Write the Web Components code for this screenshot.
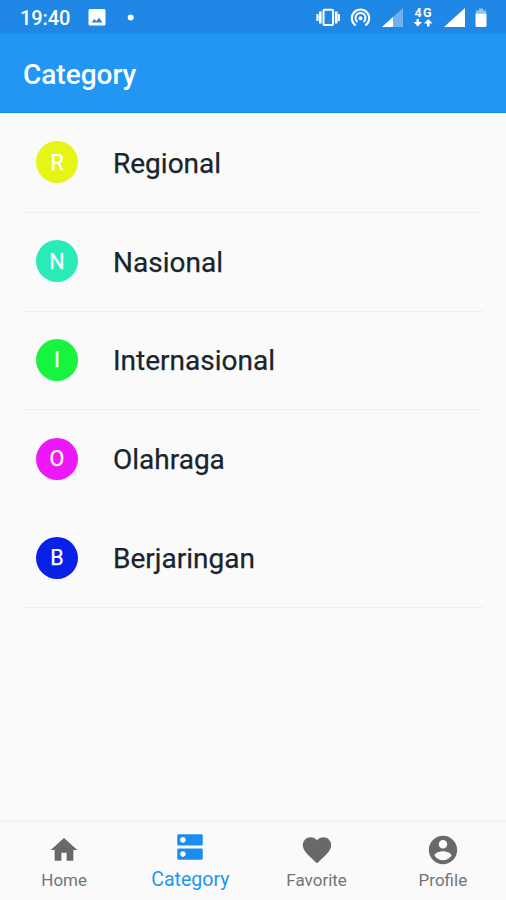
<!DOCTYPE html>
<html lang="id">
<head>
<meta charset="utf-8">
<title>Category</title>
<style>
html, body { margin: 0; height: 100%; }
body { font-family: Roboto, "Liberation Sans", sans-serif; background: #fafafa; overflow: hidden; }
</style>
</head>
<body>
<news-app></news-app>
<script>
class BaseElement extends HTMLElement {
  constructor() {
    super();
    this.attachShadow({ mode: "open" });
  }
  connectedCallback() {
    this.shadowRoot.innerHTML = this.render();
  }
}

customElements.define("status-bar", class extends BaseElement {
  render() {
    return `<style>
      :host { display: flex; justify-content: space-between; box-sizing: border-box; height: 34px; padding: 0 18px 0 20px; background: #1f87e5; color: #fff; }
      .side { display: flex; align-items: center; height: 36px; }
      time { font-size: 20px; font-weight: 500; width: 68px; letter-spacing: -.1px; }
      svg { display: block; flex: none; }
    </style>
    <div class="side">
      <time>19:40</time>
      <svg width="46" height="36" viewBox="88 0 46 36"><path fill="#fff" fill-rule="evenodd" d="M90 9h14q1.500 0 1.500 1.500v13.500q0 1.500-1.500 1.500h-14q-1.500 0-1.500-1.500v-13.500q0-1.500 1.500-1.500zM91.500 22.500h11l-3.500-4.800-2.700 3.500-1.900-2.300z"/><circle cx="130.700" cy="17.500" r="3" fill="#fff"/></svg>
    </div>
    <div class="side">
      <svg width="174" height="36" viewBox="314 0 174 36" fill="none" stroke="#fff">
        <rect x="323.500" y="9.800" width="9.500" height="15.200" rx="1" stroke-width="2"/>
        <path d="M320.300 11.500v12M336.200 11.500v12" stroke-width="2.600"/><path d="M317.500 14v7M338.800 14v7" stroke-width="2.200"/>
        <g stroke-width="2"><path d="M355.700 25.500a8.700 8.700 0 1 1 9.600 0"/><path d="M357.500 21.900a5 5 0 1 1 6 0"/></g><circle cx="360.500" cy="18.300" r="2" fill="#fff" stroke="none"/>
        <path d="M403 8v19h-21z" fill="#6eb3f0" stroke="none"/><path d="M393 17v10h-11z" fill="#fff" stroke="none"/>
        <text x="414.500" y="17" fill="#fff" stroke="none" font-family="Roboto" font-size="12.500" font-weight="700" textLength="17">4G</text>
        <path fill="#fff" stroke="none" d="M416.500 19h2.500v3h3l-4.250 4.500-4.250-4.500h3zM427 26.500h2.500v-3h3l-4.250-4.500-4.250 4.500h3z"/>
        <path d="M465 8v19h-21z" fill="#fff" stroke="none"/>
        <path d="M479 8.500h4v2h3v3h-10v-3h3z" fill="#8fc3f2" stroke="none"/><path d="M475.500 13.500h11v12q0 1.500-1.500 1.500h-8q-1.500 0-1.500-1.500z" fill="#fff" stroke="none"/>
      </svg>
    </div>`;
  }
});

customElements.define("app-bar", class extends BaseElement {
  render() {
    return `<style>
      :host { display: flex; align-items: center; box-sizing: border-box; height: 79px; padding: 4px 23px 0; background: #2196f3; color: #fff; border-bottom: 1px solid #168be9; }
      h1 { margin: 0; font-size: 28px; font-weight: 500; line-height: 34px; }
    </style><h1><slot></slot></h1>`;
  }
});

customElements.define("category-row", class extends BaseElement {
  render() {
    return `<style>
      :host { display: flex; align-items: center; box-sizing: border-box; height: 98.800px; margin: 0 22px 0 24px; padding: 0 0 1px 12px; border-bottom: 1px solid #f0f0f0; gap: 35px; }
      :host([faint]) { border-color: #f7f7f7; }
      .avatar { display: flex; align-items: center; justify-content: center; flex: none; width: 42px; height: 42px; border-radius: 50%; background: ${this.getAttribute("color")}; color: #fff; font-size: 21.500px; -webkit-text-stroke: .25px #fff; }
      .label { font-size: 28px; line-height: 34px; color: #19242d; padding-top: 3px; -webkit-text-stroke: .25px #19242d; }
    </style><span class="avatar">${this.getAttribute("letter")}</span><span class="label"><slot></slot></span>`;
  }
});

const ICONS = {
  home: "M10 20v-6h4v6h5v-8h3L12 3 2 12h3v8z",
  category: "M20 13H4c-.55 0-1 .45-1 1v6c0 .55.45 1 1 1h16c.55 0 1-.45 1-1v-6c0-.55-.45-1-1-1zM7 19c-1.100 0-2-.9-2-2s.9-2 2-2 2 .9 2 2-.9 2-2 2zM20 3H4c-.55 0-1 .45-1 1v6c0 .55.45 1 1 1h16c.55 0 1-.45 1-1V4c0-.55-.45-1-1-1zM7 9c-1.100 0-2-.9-2-2s.9-2 2-2 2 .9 2 2-.9 2-2 2z",
  favorite: "M12 21.350l-1.450-1.320C5.400 15.360 2 12.280 2 8.500 2 5.420 4.420 3 7.500 3c1.740 0 3.410.81 4.500 2.090C13.090 3.810 14.760 3 16.500 3 19.580 3 22 5.420 22 8.500c0 3.780-3.400 6.860-8.550 11.540z",
  profile: "M12 2C6.480 2 2 6.480 2 12s4.480 10 10 10 10-4.480 10-10S17.520 2 12 2zm0 3c1.660 0 3 1.340 3 3s-1.340 3-3 3-3-1.340-3-3 1.340-3 3-3zm0 14.200c-2.500 0-4.710-1.280-6-3.220.03-1.990 4-3.080 6-3.080 1.990 0 5.970 1.090 6 3.080-1.290 1.940-3.500 3.220-6 3.220z"
};

customElements.define("nav-tab", class extends BaseElement {
  render() {
    return `<style>
      :host { display: flex; flex-direction: column; align-items: center; flex: 1; padding-top: 11px; color: #747474; font-size: 17px; line-height: 22px; }
      :host([active]) { padding-top: 8px; color: #2196f3; font-size: 19.500px; }
      svg { display: block; fill: #696969; }
      :host([active]) svg { fill: #1b8df0; }
      :host([icon="home"]) svg { width: 32px; height: 32px; padding: 1px; }
      span { padding-top: 2px; }
      :host([active]) span { padding-top: 5px; }
    </style>
    <svg width="34" height="34" viewBox="0 0 24 24"><path d="${ICONS[this.getAttribute("icon")]}"/></svg>
    <span><slot></slot></span>`;
  }
});

customElements.define("bottom-nav", class extends BaseElement {
  render() {
    return `<style>
      :host { display: flex; box-sizing: border-box; height: 80px; padding-left: 1px; border-top: 2px solid #f2f2f2; background: #fafafa; }
    </style><slot></slot>`;
  }
});

customElements.define("news-app", class extends BaseElement {
  render() {
    return `<style>
      :host { display: flex; flex-direction: column; height: 900px; width: 506px; background: #fafafa; }
      main { flex: 1; min-height: 0; padding-top: 1px; }
    </style>
    <status-bar></status-bar>
    <app-bar>Category</app-bar>
    <main>
      <category-row letter="R" color="#e7f516">Regional</category-row>
      <category-row letter="N" color="#29ebb7">Nasional</category-row>
      <category-row letter="I" color="#18f33f">Internasional</category-row>
      <category-row letter="O" color="#ed18f7" faint>Olahraga</category-row>
      <category-row letter="B" color="#0820e8">Berjaringan</category-row>
    </main>
    <bottom-nav>
      <nav-tab icon="home">Home</nav-tab>
      <nav-tab icon="category" active>Category</nav-tab>
      <nav-tab icon="favorite">Favorite</nav-tab>
      <nav-tab icon="profile">Profile</nav-tab>
    </bottom-nav>`;
  }
});
</script>
</body>
</html>
